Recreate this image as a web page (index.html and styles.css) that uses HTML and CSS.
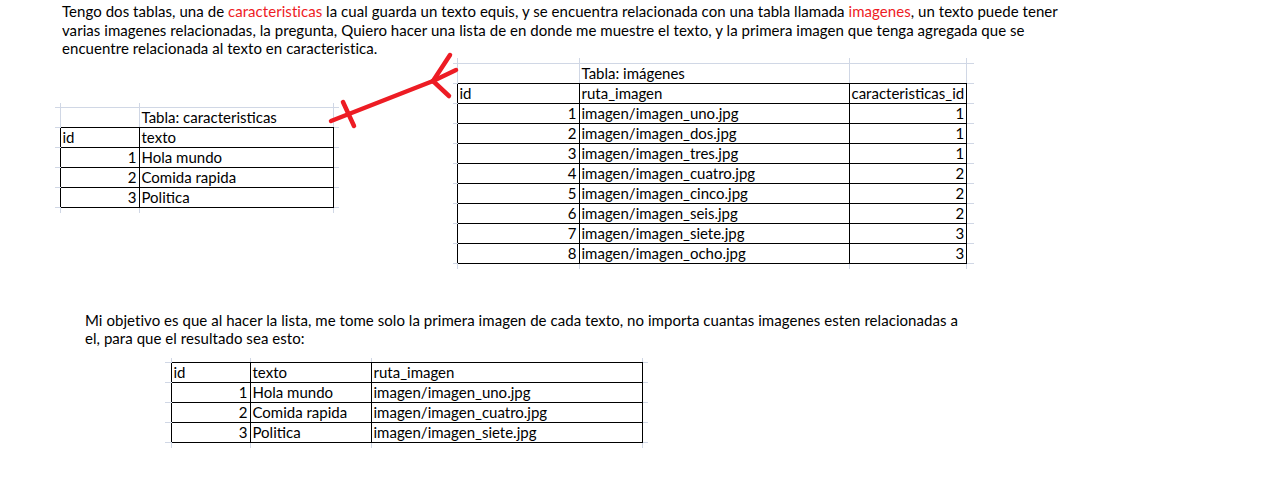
FILE: index.html
```html
<!DOCTYPE html>
<html lang="es">

<head>
    <meta charset="UTF-8">
    <title>Tablas caracteristicas e imagenes</title>
    <link rel="stylesheet" href="styles.css">
</head>

<body>

    <div class="page">
        <p class="intro">Tengo dos tablas, una de <span class="red">caracteristicas</span> la cual guarda un texto equis, y se encuentra relacionada con una tabla llamada <span class="red">imagenes</span>, un texto puede tener<br>varias imagenes relacionadas, la pregunta, Quiero hacer una lista de en donde me muestre el texto, y la primera imagen que tenga agregada que se<br>encuentre relacionada al texto en caracteristica.</p>

        <div class="tables">
            <!-- tabla caracteristicas -->
            <table class="sheet chars">
                <colgroup>
                    <col class="edge-l"><col class="c-id"><col class="c-texto"><col class="edge-r">
                </colgroup>
                <tr class="edge"><td></td><td></td><td></td><td></td></tr>
                <tr class="row over"><td></td><td></td><td>Tabla: caracteristicas</td><td></td></tr>
                <tr class="row data"><td></td><td class="b">id</td><td class="b">texto</td><td></td></tr>
                <tr class="row data"><td></td><td class="b num">1</td><td class="b">Hola mundo</td><td></td></tr>
                <tr class="row data"><td></td><td class="b num">2</td><td class="b">Comida rapida</td><td></td></tr>
                <tr class="row data"><td></td><td class="b num">3</td><td class="b">Politica</td><td></td></tr>
                <tr class="edge"><td></td><td></td><td></td><td></td></tr>
            </table>

            <!-- tabla imagenes -->
            <table class="sheet imgs">
                <colgroup>
                    <col class="edge-l"><col class="c-id"><col class="c-ruta"><col class="c-car"><col class="edge-r">
                </colgroup>
                <tr class="edge tall"><td></td><td></td><td></td><td></td><td></td></tr>
                <tr class="row over"><td></td><td></td><td>Tabla: imágenes</td><td></td><td></td></tr>
                <tr class="row data"><td></td><td class="b">id</td><td class="b">ruta_imagen</td><td class="b">caracteristicas_id</td><td></td></tr>
                <tr class="row data"><td></td><td class="b num">1</td><td class="b">imagen/imagen_uno.jpg</td><td class="b num">1</td><td></td></tr>
                <tr class="row data"><td></td><td class="b num">2</td><td class="b">imagen/imagen_dos.jpg</td><td class="b num">1</td><td></td></tr>
                <tr class="row data"><td></td><td class="b num">3</td><td class="b">imagen/imagen_tres.jpg</td><td class="b num">1</td><td></td></tr>
                <tr class="row data"><td></td><td class="b num">4</td><td class="b">imagen/imagen_cuatro.jpg</td><td class="b num">2</td><td></td></tr>
                <tr class="row data"><td></td><td class="b num">5</td><td class="b">imagen/imagen_cinco.jpg</td><td class="b num">2</td><td></td></tr>
                <tr class="row data"><td></td><td class="b num">6</td><td class="b">imagen/imagen_seis.jpg</td><td class="b num">2</td><td></td></tr>
                <tr class="row data"><td></td><td class="b num">7</td><td class="b">imagen/imagen_siete.jpg</td><td class="b num">3</td><td></td></tr>
                <tr class="row data"><td></td><td class="b num">8</td><td class="b">imagen/imagen_ocho.jpg</td><td class="b num">3</td><td></td></tr>
                <tr class="edge"><td></td><td></td><td></td><td></td><td></td></tr>
            </table>
        </div>

        <p class="goal">Mi objetivo es que al hacer la lista, me tome solo la primera imagen de cada texto, no importa cuantas imagenes esten relacionadas a<br>el, para que el resultado sea esto:</p>

        <!-- resultado esperado -->
        <table class="sheet result">
            <colgroup>
                <col class="edge-l"><col class="c-id"><col class="c-texto"><col class="c-ruta"><col class="edge-r">
            </colgroup>
            <tr class="edge over"><td></td><td></td><td></td><td></td><td></td></tr>
            <tr class="row data"><td></td><td class="b">id</td><td class="b">texto</td><td class="b">ruta_imagen</td><td></td></tr>
            <tr class="row data"><td></td><td class="b num">1</td><td class="b">Hola mundo</td><td class="b">imagen/imagen_uno.jpg</td><td></td></tr>
            <tr class="row data"><td></td><td class="b num">2</td><td class="b">Comida rapida</td><td class="b">imagen/imagen_cuatro.jpg</td><td></td></tr>
            <tr class="row data"><td></td><td class="b num">3</td><td class="b">Politica</td><td class="b">imagen/imagen_siete.jpg</td><td></td></tr>
            <tr class="edge"><td></td><td></td><td></td><td></td><td></td></tr>
        </table>

        <!-- flecha roja dibujada encima -->
        <svg class="arrow" width="150" height="90" viewBox="0 0 150 90">
            <g fill="none" stroke="#ed1c24" stroke-width="4.5" stroke-linecap="round" stroke-linejoin="round">
                <path d="M11 71 L113 31"/>
                <path d="M113 31 L130 5"/>
                <path d="M113 31 L136 20"/>
                <path d="M113 31 L129 46"/>
                <path d="M23 52 L34 76"/>
            </g>
        </svg>
    </div>

</body>

</html>
```

FILE: styles.css
```css
body {
    margin: 0;
    background: #fff;
    color: #000;
    font-family: Lato, "Liberation Sans", sans-serif;
    font-size: 15px;
}

.page {
    position: relative;
    width: 1280px;
    height: 478px;
}

p {
    margin: 0;
    line-height: 18.5px;
    letter-spacing: 0.05px;
    white-space: nowrap;
}

.intro {
    padding: 2px 0 0 62px;
}

.red {
    color: #ee1c25;
}

.tables {
    display: flex;
    align-items: flex-start;
    padding-left: 55px;
}

.chars {
    margin-top: 45px;
}

.imgs {
    margin-left: 114px;
}

.goal {
    margin-top: 42px;
    padding-left: 85px;
}

.result {
    margin: 10px 0 0 165px;
}

/* hoja tipo excel */
.sheet {
    border-collapse: collapse;
    table-layout: fixed;
}

.sheet td {
    border: 1px solid #d0d7e5;
    padding: 0 2px 1px 2px;
    vertical-align: bottom;
    white-space: nowrap;
    overflow: hidden;
    line-height: 18px;
}

.sheet tr.row {
    height: 20px;
}

.sheet tr.edge {
    height: 5px;
}

.sheet tr.edge.tall {
    height: 6px;
}

.sheet tr.edge td {
    padding: 0;
    line-height: 0;
}

.sheet tr:first-child td {
    border-top: none;
}

.sheet tr:last-child td {
    border-bottom: none;
}

.sheet td:first-child {
    border-left: none;
    padding: 0;
}

.sheet td:last-child {
    border-right: none;
    padding: 0;
}

.sheet td.b {
    border-color: #000;
}

.sheet tr.over td {
    border-bottom-color: #000;
}

.sheet tr.over td:first-child,
.sheet tr.over td:last-child {
    border-bottom-color: #d0d7e5;
}

.sheet tr.data td:first-child {
    border-right-color: #000;
}

.sheet td.num {
    text-align: right;
}

.edge-l {
    width: 5px;
}

.edge-r {
    width: 6px;
}

.chars .c-id,
.result .c-id {
    width: 79px;
}

.chars .c-texto {
    width: 194px;
}

.imgs .edge-l {
    width: 4px;
}

.imgs .c-id {
    width: 122px;
}

.imgs .c-ruta {
    width: 270px;
}

.imgs .c-car {
    width: 114px;
}

.imgs .edge-r {
    width: 7px;
}

.result .edge-l {
    width: 6px;
}

.result .c-texto {
    width: 121px;
}

.result .c-ruta {
    width: 271px;
}

.arrow {
    position: absolute;
    left: 320px;
    top: 50px;
}
```
